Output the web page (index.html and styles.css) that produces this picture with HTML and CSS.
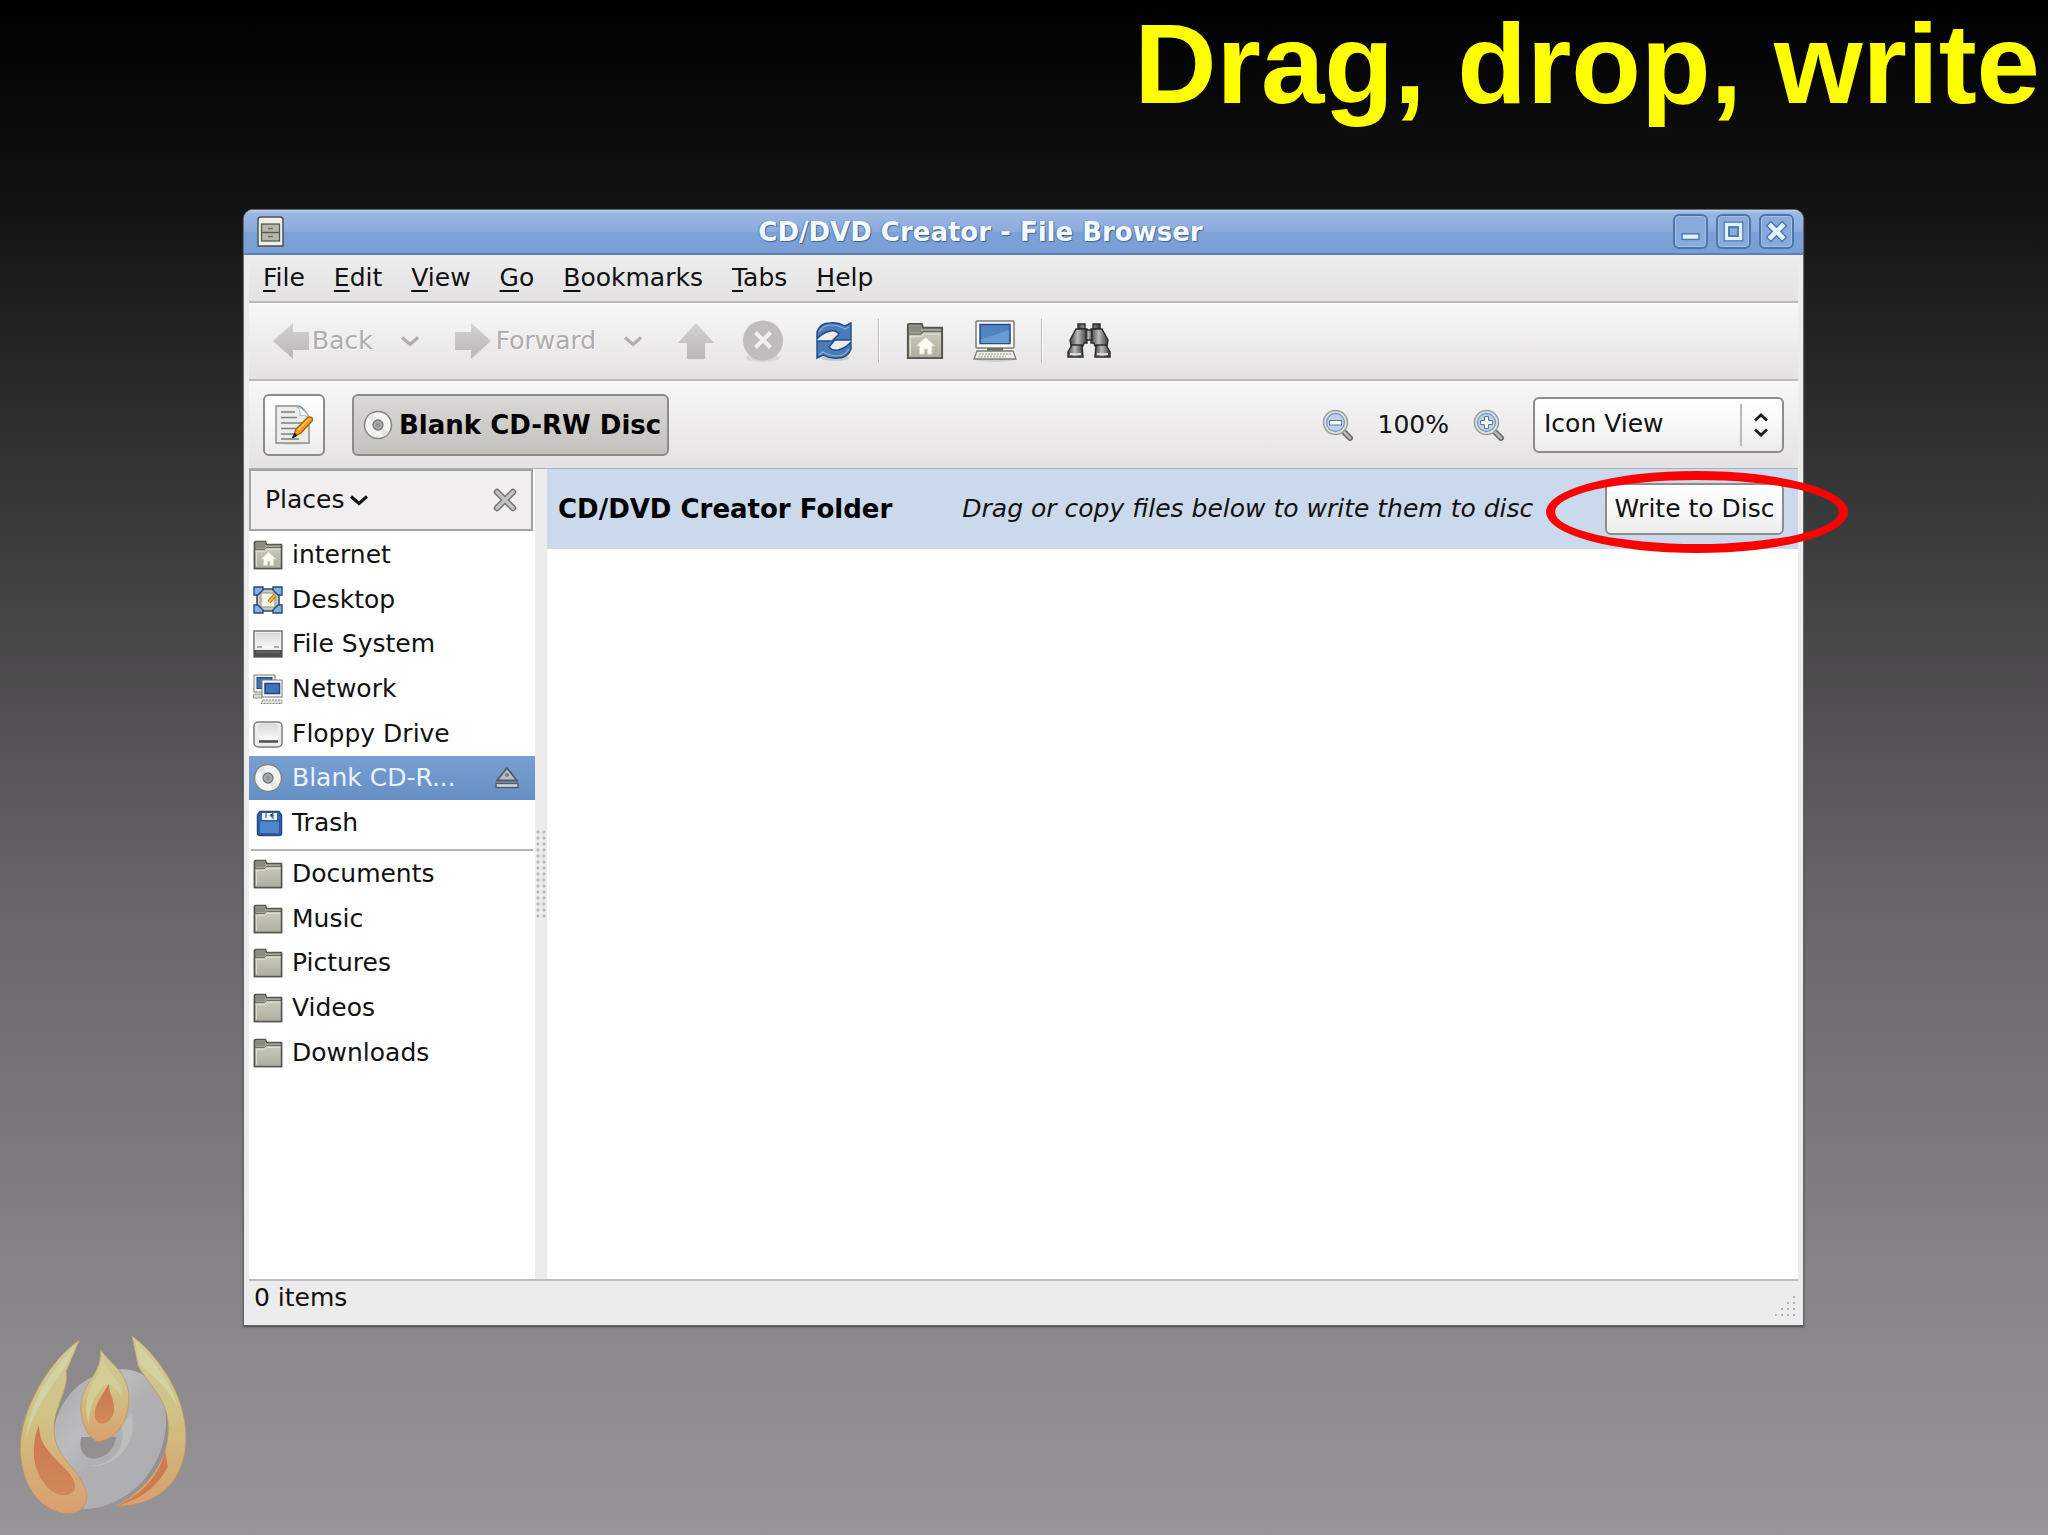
FILE: index.html
```html
<!DOCTYPE html>
<html lang="en">
<head>
<meta charset="utf-8">
<title>Drag, drop, write</title>
<link rel="stylesheet" href="styles.css">
</head>
<body>
<svg class="defs" aria-hidden="true">
  <defs>
    <linearGradient id="g-folder" x1="0" y1="0" x2="0" y2="1"><stop offset="0" stop-color="#c9cabc"/><stop offset="1" stop-color="#adae9e"/></linearGradient>
    <linearGradient id="g-grey" x1="0" y1="0" x2="0" y2="1"><stop offset="0" stop-color="#d2d0d1"/><stop offset="1" stop-color="#b9b7b8"/></linearGradient>
    <linearGradient id="g-white" x1="0" y1="0" x2="0" y2="1"><stop offset="0" stop-color="#d8d8d8"/><stop offset="1" stop-color="#fbfbfb"/></linearGradient>
    <linearGradient id="g-metal" x1="0" y1="0" x2="1" y2="0"><stop offset="0" stop-color="#444"/><stop offset=".45" stop-color="#bbb"/><stop offset="1" stop-color="#3a3a3a"/></linearGradient>
    <symbol id="folder" viewBox="0 0 30 30">
      <path d="M1.500 28.500V2.500Q1.500 1.500 2.500 1.500H12.500L13.500 4.500H28.500V28.500Z" fill="#a5a697" stroke="#55574f" stroke-width="1.500"/>
      <path d="M2.500 9.500H11.500L13.500 7.500H28.500V28.500H1.500V10Z" fill="url(#g-folder)" stroke="#6d6f65" stroke-width="1"/>
      <path d="M1.500 2V28.500H28.500V5" fill="none" stroke="#55574f" stroke-width="1.500"/>
      <path d="M3.500 26.500V11.500H12L14 9.500H26.500" fill="none" stroke="#dcddd2" stroke-width="1"/>
      <path d="M3 3h9v5H3z" fill="#8b8c80"/>
    </symbol>
    <symbol id="home" viewBox="0 0 30 30">
      <use href="#folder"/>
      <path d="M15.500 12L23 19H20.500V25.500H17V21.500H14.500V25.500H10.500V19H8Z" fill="#fbfaf0" stroke="#d0cfbf" stroke-width=".6"/>
    </symbol>
    <symbol id="disc" viewBox="0 0 30 30">
      <circle cx="15" cy="15" r="13.500" fill="#f4f4f4" stroke="#85857f" stroke-width="1.500"/>
      <path d="M15 15L4 8A13 13 0 0 1 10 3ZM15 15L26 22A13 13 0 0 1 20 27Z" fill="#e4e4e4"/>
      <circle cx="15" cy="15" r="5" fill="#a3a9ad" stroke="#777" stroke-width="1.300"/>
      <circle cx="15" cy="15" r="2" fill="#8d9498"/>
    </symbol>
    <symbol id="lens" viewBox="0 0 32 32">
      <path d="M20 21L28 29" stroke="#6b6b67" stroke-width="6" stroke-linecap="round"/>
      <path d="M22 23L28 29" stroke="#b9b9b3" stroke-width="2.500" stroke-linecap="round"/>
      <circle cx="13.500" cy="13.500" r="12" fill="#dfe3e2" stroke="#9a9e99" stroke-width="1.500"/>
      <circle cx="13.500" cy="13.500" r="9" fill="#bcd0ea" stroke="#7c97bd" stroke-width="1.300"/>
    </symbol>
    <symbol id="chevron" viewBox="0 0 20 12"><path d="M2 2.500L10 9.500L18 2.500" fill="none" stroke="currentColor" stroke-width="3"/></symbol>
  </defs>
</svg>

<header class="slide-head"><h1 class="slide-title">Drag, drop, write</h1></header>

<main class="window">
  <div class="titlebar">
    <svg class="app-icon" viewBox="0 0 27 31">
      <path d="M1 4Q1 1 4 1H23Q26 1 26 4V30H1Z" fill="#f1f1ec" stroke="#4c5350" stroke-width="1.500"/>
      <rect x="4.500" y="8" width="18" height="17" fill="#b6b8ac" stroke="#555a55" stroke-width="1.300"/>
      <path d="M5 16.500H22" stroke="#555a55" stroke-width="1.500"/><path d="M11 12.500H16M11 20.500H16" stroke="#6b6f6b" stroke-width="1.500"/>
    </svg>
    <h2 class="window-title">CD/DVD Creator - File Browser</h2>
    <div class="window-buttons">
      <button class="wbtn" aria-label="Minimize"><svg viewBox="0 0 33 33"><rect x="7.500" y="19" width="18" height="6" fill="#e3f3ff" stroke="#4a76aa" stroke-width="1.500"/></svg></button>
      <button class="wbtn" aria-label="Maximize"><svg viewBox="0 0 33 33"><rect x="9" y="9" width="15" height="15" fill="none" stroke="#4a76aa" stroke-width="6"/><rect x="9" y="9" width="15" height="15" fill="none" stroke="#e3f3ff" stroke-width="3.500"/><rect x="12" y="12.500" width="9" height="8.500" fill="none" stroke="#4a76aa" stroke-width="1.200"/></svg></button>
      <button class="wbtn" aria-label="Close"><svg viewBox="0 0 33 33"><path d="M10.500 10.500L22.500 22.500M22.500 10.500L10.500 22.500" stroke="#4a76aa" stroke-width="8" stroke-linecap="square"/><path d="M10.500 10.500L22.500 22.500M22.500 10.500L10.500 22.500" stroke="#e3f3ff" stroke-width="5"  stroke-linecap="square"/></svg></button>
    </div>
  </div>

  <div class="window-body">
    <nav class="menubar">
      <button class="menu"><u>F</u>ile</button>
      <button class="menu"><u>E</u>dit</button>
      <button class="menu"><u>V</u>iew</button>
      <button class="menu"><u>G</u>o</button>
      <button class="menu"><u>B</u>ookmarks</button>
      <button class="menu"><u>T</u>abs</button>
      <button class="menu"><u>H</u>elp</button>
    </nav>

    <div class="toolbar" role="toolbar">
      <button class="tool nav" disabled><svg class="i36" viewBox="0 0 36 36"><path d="M0 18L20 0V9H36V27H20V36Z" fill="url(#g-grey)"/></svg><span>Back</span></button>
      <button class="tool back-drop" aria-label="Back history" disabled><svg class="chev"><use href="#chevron"/></svg></button>
      <button class="tool nav" disabled><svg class="i36" viewBox="0 0 36 36"><path d="M36 18L16 0V9H0V27H16V36Z" fill="url(#g-grey)"/></svg><span class="fwd">Forward</span></button>
      <button class="tool fwd-drop" aria-label="Forward history" disabled><svg class="chev"><use href="#chevron"/></svg></button>
      <button class="tool up" aria-label="Up" disabled><svg class="i36" viewBox="0 0 36 36"><path d="M18 0L36 20H27V36H9V20H0Z" fill="url(#g-grey)"/></svg></button>
      <button class="tool stop" aria-label="Stop" disabled><svg class="i42" viewBox="0 0 42 42"><ellipse cx="21" cy="38" rx="17" ry="4" fill="#d8d7d7"/><circle cx="21" cy="20.500" r="20" fill="#bfbdbe"/><path d="M13.500 12.500L28.500 27.500M28.500 12.500L13.500 27.500" stroke="#f1f1f1" stroke-width="4"/></svg></button>
      <button class="tool reload" aria-label="Reload"><svg class="i36 tall" viewBox="0 0 36 40">
        <ellipse cx="19" cy="37" rx="14" ry="3" fill="#c9c9c9"/>
        <path d="M1 18V11Q4 2 14 2Q22 1 29 5L35 2V19H17L23 13Q20 9 14 10Q6 12 1 18Z" fill="#4a7cba" stroke="#204a87" stroke-width="1.400"/>
        <path d="M35 21V28Q32 37 22 37Q14 38 7 34L1 37V20H18L13 26Q16 30 22 29Q30 27 35 21Z" fill="#4a7cba" stroke="#204a87" stroke-width="1.400"/>
        <path d="M3 11Q7 4 15 4Q22 4 29 8L33 6M33 28Q29 35 21 35Q14 35 7 31L3 34" stroke="#8db1da" stroke-width="1.200" fill="none"/>
      </svg></button>
      <span class="sep"></span>
      <button class="tool home" aria-label="Home"><svg class="i38"><use href="#home"/></svg></button>
      <button class="tool computer" aria-label="Computer"><svg class="i44" viewBox="0 0 44 42">
        <ellipse cx="22" cy="39" rx="20" ry="3" fill="#cfcfcf"/>
        <rect x="3" y="1" width="38" height="27" rx="1" fill="#fafafa" stroke="#7b7d78" stroke-width="1.500"/>
        <rect x="7" y="4.500" width="30" height="19" fill="#4f83c4" stroke="#274c80" stroke-width="1.500"/>
        <path d="M8 19L22 15L36 10V23H8Z" fill="#6a9ad2"/>
        <path d="M14 28H30V31H14Z" fill="#6c6e69"/>
        <path d="M4 31H40L43 39H1Z" fill="#ecece8" stroke="#7b7d78" stroke-width="1.300"/>
        <path d="M6 34H38M5 36.500H33" stroke="#b5b6b0" stroke-width="1.500" stroke-dasharray="2 1"/>
      </svg></button>
      <span class="sep second"></span>
      <button class="tool search" aria-label="Search"><svg class="i44 short" viewBox="0 0 44 36">
        <g fill="url(#g-metal)" stroke="#2b2b2b" stroke-width="1.400">
          <path d="M11 1H18V6H11ZM26 1H33V6H26Z"/>
          <path d="M9 6H20V20H17L16 23H4L3 17Z"/><path d="M24 6H35L41 17L40 23H28L27 20H24Z"/>
          <path d="M19 7H25V17H19Z"/>
          <path d="M5 22H15L16 34H1V29Z"/><path d="M29 22H39L43 29V34H28Z"/>
        </g>
        <path d="M3 31H14M30 31H41" stroke="#dadada" stroke-width="2"/>
      </svg></button>
    </div>

    <div class="location">
      <button class="edit-btn" aria-label="Edit location"><svg viewBox="0 0 38 40">
        <ellipse cx="18" cy="37.500" rx="17" ry="2.500" fill="#d4d4d4"/>
        <path d="M1 1H24Q29 3 34 12V38H1Z" fill="#ececea" stroke="#8f918c" stroke-width="1.500"/>
        <path d="M22 2Q26 5 25 11Q31 9 34 14Q31 4 22 2Z" fill="#fff" stroke="#a6b9d0"/>
        <path d="M6 7H20M6 12.500H22M6 18H29M6 23.500H25M6 29H18M6 34H24" stroke="#7e807c" stroke-width="1.500"/>
        <path d="M18 32L21 24L33 12Q37 11 38 15L26 28Z" fill="#f79b1c" stroke="#a55d00" stroke-width="1.200"/>
        <path d="M23 25L34 14" stroke="#fcc767" stroke-width="1.500"/><path d="M17.500 33L19.500 28L22 30.500Z" fill="#222" stroke="#222"/>
      </svg></button>
      <button class="path-btn"><svg class="i30"><use href="#disc"/></svg><span>Blank CD-RW Disc</span></button>
      <div class="zoom">
        <button class="tool" aria-label="Zoom out"><svg class="i32" viewBox="0 0 32 32"><use href="#lens"/><rect x="7.500" y="11.500" width="12" height="4.500" fill="#fff" stroke="#56779f"/></svg></button>
        <span class="zoom-level">100%</span>
        <button class="tool" aria-label="Zoom in"><svg class="i32" viewBox="0 0 32 32"><use href="#lens"/><path d="M11.500 7.500H15.500V11.500H19.500V15.500H15.500V19.500H11.500V15.500H7.500V11.500H11.500Z" fill="#fff" stroke="#56779f"/></svg></button>
      </div>
      <div class="view-mode">
        <select class="view-select" aria-label="View mode"><option>Icon View</option><option>List View</option><option>Compact View</option></select>
        <svg class="view-arrows" viewBox="0 0 20 26"><path d="M4 8.500L10 3L16 8.500M4 17.500L10 23L16 17.500" fill="none" stroke="#1c1c1c" stroke-width="2.800"/></svg>
      </div>
    </div>

    <div class="panes">
      <aside class="sidebar">
        <div class="side-head">
          <button class="places">Places<svg class="chev"><use href="#chevron"/></svg></button>
          <button class="side-close" aria-label="Close side pane"><svg class="i24" viewBox="0 0 24 24"><path d="M4 4L20 20M20 4L4 20" stroke="#757575" stroke-width="6.500" stroke-linecap="round"/><path d="M4 4L20 20M20 4L4 20" stroke="#c2c2c2" stroke-width="3.500" stroke-linecap="round"/></svg></button>
        </div>
        <ul class="places-list devices">
          <li class="place"><svg class="i30"><use href="#home"/></svg><span>internet</span></li>
          <li class="place"><svg class="i30" viewBox="0 0 30 30">
            <rect x="4" y="4" width="22" height="22" fill="#c7cbb6" stroke="#39485c" stroke-width="1.500"/>
            <rect x="8" y="8" width="14" height="14" fill="#f6f5e5" stroke="#8f927d"/>
            <path d="M16 17L22 10" stroke="#9a6b00" stroke-width="4"/><path d="M16 17L22 10" stroke="#f2b632" stroke-width="2.500"/>
            <path d="M1 2H10V5L5 10H1ZM20 2H29V10H25L20 5ZM1 20H5L10 25V28H1ZM29 20V28H20V25L25 20Z" fill="#86aee0" stroke="#204a87" stroke-width="1.400"/>
          </svg><span>Desktop</span></li>
          <li class="place"><svg class="i30" viewBox="0 0 30 30"><rect x="1" y="2" width="28" height="26" fill="#f0f0f0" stroke="#72746f" stroke-width="1.500"/><path d="M3 4H27V16Q15 23 3 16Z" fill="url(#g-white)"/><path d="M4 18H9M21 18H26" stroke="#999" stroke-width="1.500"/><path d="M1 21H29V28H1Z" fill="#4e504d"/><path d="M3 23H27" stroke="#777"/></svg><span>File System</span></li>
          <li class="place"><svg class="i30" viewBox="0 0 30 30"><rect x="1" y="1" width="21" height="17" fill="#f3f3f1" stroke="#7b7d78"/><rect x="4" y="3.500" width="15" height="11" fill="#3f70b0" stroke="#204a87"/><path d="M1 20H9V24H0Z" fill="#d8d9cf" stroke="#96978f"/><rect x="9" y="6" width="20" height="17" fill="#f5f5f3" stroke="#7b7d78"/><rect x="12" y="9.500" width="14.500" height="10" fill="#3e73b7" stroke="#204a87" stroke-width="1.500"/><path d="M10 26H29V29.500H8Z" fill="#ddded8" stroke="#85877f" stroke-dasharray="2 1"/></svg><span>Network</span></li>
          <li class="place"><svg class="i30" viewBox="0 0 30 30"><rect x="1" y="3" width="28" height="25" rx="4" fill="#ededed" stroke="#7c7e79" stroke-width="1.500"/><rect x="5" y="4.500" width="20" height="16" rx="3" fill="url(#g-white)"/><path d="M6 22.500H25" stroke="#4f504e" stroke-width="2.500"/></svg><span>Floppy Drive</span></li>
          <li class="place selected"><svg class="i30"><use href="#disc"/></svg><span>Blank CD-R...</span><button class="eject" aria-label="Eject"><svg class="i24" viewBox="0 0 24 24"><path d="M12 2L22 14.500H2Z" fill="#b8bfc5" stroke="#555c63" stroke-width="1.800"/><rect x="1" y="17.500" width="22" height="4" fill="#d7dbde" stroke="#555c63" stroke-width="1.500"/><circle cx="12" cy="9" r="2" fill="#777f86"/></svg></button></li>
          <li class="place"><svg class="i30" viewBox="0 0 30 30"><path d="M4.500 7L7 3.500H26L28.500 7V25Q28.500 27.500 26 27.500H7Q4.500 27.500 4.500 25Z" fill="#3565a4" stroke="#204a87" stroke-width="1.500"/><path d="M9 5H24V12H9Z" fill="#f2f6fb"/><path d="M13 5V10M17 7L20 10V5" stroke="#5b7ca8" stroke-width="1.500"/><path d="M6.500 13H26.500V25.500H6.500Z" fill="#5188cc" stroke="#2c5a99"/></svg><span>Trash</span></li>
        </ul>
        <hr class="side-rule">
        <ul class="places-list bookmarks">
          <li class="place"><svg class="i30"><use href="#folder"/></svg><span>Documents</span></li>
          <li class="place"><svg class="i30"><use href="#folder"/></svg><span>Music</span></li>
          <li class="place"><svg class="i30"><use href="#folder"/></svg><span>Pictures</span></li>
          <li class="place"><svg class="i30"><use href="#folder"/></svg><span>Videos</span></li>
          <li class="place"><svg class="i30"><use href="#folder"/></svg><span>Downloads</span></li>
        </ul>
      </aside>
      <div class="splitter"><span class="grip"></span></div>
      <section class="content">
        <div class="infobar">
          <strong class="info-title">CD/DVD Creator Folder</strong>
          <em class="info-hint">Drag or copy files below to write them to disc</em>
          <div class="write-wrap">
            <button class="write-btn">Write to Disc</button>
            <span class="ring"></span>
          </div>
        </div>
      </section>
    </div>

    <footer class="statusbar">
      <span>0 items</span>
      <svg class="resize" viewBox="0 0 24 24"><path d="M19 1h2v2h-2zM13 7h2v2h-2zM19 7h2v2h-2zM7 13h2v2h-2zM13 13h2v2h-2zM19 13h2v2h-2zM1 19h2v2h-2zM7 19h2v2h-2zM13 19h2v2h-2zM19 19h2v2h-2z" fill="#b2b2b2"/></svg>
    </footer>
  </div>
</main>

<footer class="slide-foot">
  <svg class="logo" viewBox="0 0 560 560" role="img" aria-label="Burning disc">
    <defs>
      <linearGradient id="g-flame" x1="0" y1="0" x2="0" y2="1"><stop offset="0" stop-color="#cfc99a"/><stop offset=".45" stop-color="#cfc284"/><stop offset="1" stop-color="#d99f6c"/></linearGradient>
      <linearGradient id="g-core" x1="0" y1="0" x2="0" y2="1"><stop offset="0" stop-color="#cf7450"/><stop offset="1" stop-color="#cf8a58"/></linearGradient>
      <linearGradient id="g-disc" x1="0" y1="0" x2="1" y2="1"><stop offset="0" stop-color="#a9a9ae"/><stop offset=".35" stop-color="#bcbcbe"/><stop offset=".5" stop-color="#b0b0b3"/><stop offset="1" stop-color="#acacb0"/></linearGradient>
    </defs>
    <path fill-rule="evenodd" d="M370 105C450 110 500 170 500 260C500 400 390 525 250 528C190 490 150 400 160 310C166 200 250 110 370 105ZM245 310C235 345 250 375 285 375C320 372 345 345 350 310Z" fill="url(#g-disc)"/>
    <path d="M365 275C385 330 340 400 270 395C330 410 420 340 395 240Z" fill="#bdbebc"/>
    <path d="M240 18C160 70 75 200 62 320C55 420 95 520 190 540C240 545 265 520 260 480C250 410 165 380 163 290C160 220 210 170 200 110C215 80 225 50 240 18Z" fill="url(#g-flame)" stroke="#b99258" stroke-width="2"/>
    <path d="M117 275C95 330 95 400 130 445C155 485 200 500 225 470C235 425 180 400 140 345C125 325 118 300 117 275Z" fill="url(#g-core)"/>
    <path d="M225 35C150 115 90 200 78 320C92 250 145 170 205 85Z" fill="#d3d2a2"/>
    <path d="M397 5C460 50 560 170 560 310C560 440 480 520 345 518C430 480 520 380 505 260C500 190 430 130 415 95Z" fill="url(#g-flame)" stroke="#b99258" stroke-width="2"/>
    <path d="M497 350C480 430 420 490 350 517C430 500 480 450 505 400Z" fill="#cf7a52"/>
    <path d="M408 22C450 70 510 130 535 220C500 150 450 120 420 90Z" fill="#d3d2a2"/>
    <path d="M302 45C325 85 385 110 388 190C388 270 345 320 292 325C255 300 235 250 247 190C262 140 308 110 302 45Z" fill="url(#g-flame)" stroke="#b99258" stroke-width="2"/>
    <path d="M310 70C320 120 370 140 368 190C345 150 315 140 300 170C280 190 265 240 270 275C250 240 260 170 290 130Z" fill="#d3cd98"/>
    <path d="M327 150C310 185 280 215 286 250C292 285 340 270 343 230C346 200 328 180 327 150Z" fill="url(#g-core)"/>
  </svg>
</footer>
</body>
</html>
```
FILE: styles.css
```css
* { box-sizing: border-box; }

body {
  margin: 0;
  min-height: 100vh;
  display: flex;
  flex-direction: column;
  background: linear-gradient(#000 0%, #131213 13%, #343334 30%, #676567 58%, #858385 82%, #979597 100%) no-repeat #979597;
  font-family: "DejaVu Sans", sans-serif;
  font-size: 25px;
  line-height: 32px;
  color: #111;
}

.defs { position: absolute; width: 0; height: 0; }

button, select { font: inherit; color: inherit; margin: 0; }
button { background: none; border: 0; padding: 0; }
svg { display: block; flex: none; }

.i24 { width: 24px; height: 24px; }
.i30 { width: 30px; height: 30px; }
.i32 { width: 32px; height: 32px; }
.i36 { width: 36px; height: 36px; }
.i38 { width: 38px; height: 38px; }
.i42 { width: 42px; height: 42px; }
.i44 { width: 44px; height: 42px; }
.i36.tall { height: 40px; }
.i44.short { height: 36px; }
.chev { width: 20px; height: 12px; }

.slide-head { padding-right: 8px; margin-bottom: 81px; }
.slide-title {
  margin: 0;
  text-align: right;
  color: #ff0;
  font: bold 114px/128px "Liberation Sans", Arial, sans-serif;
}

.window {
  margin: 0 244px 0 243px;
  border: 1px solid #62666a;
  border-radius: 10px 10px 0 0;
  background: #edecec;
  box-shadow: 0 1px 2px #444;
}

.titlebar {
  height: 45px;
  display: flex;
  align-items: center;
  padding: 0 9px 0 13px;
  border-radius: 9px 9px 0 0;
  border-bottom: 2px solid #5b82b4;
  background: linear-gradient(#bccff0 0, #9ab7e3 3px, #8cabdc 50%, #7ba1d7 52%, #7a9fd4 100%);
}
.app-icon { width: 27px; height: 31px; }
.window-title {
  flex: 1;
  margin: 0;
  padding-left: 4px;
  text-align: center;
  font-size: 26px;
  line-height: 32px;
  color: #f4fbff;
  text-shadow: 1px 1px 1px #3e6396, -1px 0 1px #5f86bc;
}
.window-buttons { display: flex; gap: 8px; }
.wbtn {
  width: 35px;
  height: 35px;
  border: 2px solid #4a76aa;
  border-radius: 6px;
  background: #88abdc;
  box-shadow: inset 0 0 0 1px #a3c0e8;
}
.wbtn svg { width: 31px; height: 31px; }

.window-body {
  border: solid #edecec;
  border-width: 0 5px 2px;
}

.menubar {
  height: 48px;
  display: flex;
  align-items: center;
  gap: 29px;
  padding-left: 14px;
  background: linear-gradient(#ededec, #e4e2e3);
  border-bottom: 2px solid #bbb9ba;
}
.menu u { text-underline-offset: 4px; text-decoration-thickness: 2px; }

.toolbar, .location {
  display: flex;
  align-items: center;
  background: linear-gradient(#f8f7f7, #e4e2e3);
}
.toolbar {
  height: 78px;
  padding: 0 0 2px 24px;
  border-top: 1px solid #fff;
  border-bottom: 2px solid #bbb9ba;
}
.tool { display: flex; align-items: center; }
.tool:disabled { color: #aeacad; text-shadow: 1px 1px 0 #fff; }
.nav { gap: 3px; }
.fwd { padding-left: 2px; }
.back-drop, .fwd-drop { margin: 0 35px 0 27px; }
.up { margin-right: 28px; }
.stop { margin-right: 32px; }
.sep { width: 2px; height: 44px; margin: 0 26px; background: #bcbabb; border-right: 1px solid #fff; }
.home { margin-right: 29px; }
.sep.second { margin: 0 24px; }

.location {
  height: 88px;
  padding: 0 14px;
  border-bottom: 1px solid #a9b0ba;
}
.edit-btn, .path-btn, .write-btn, .view-select {
  border: 2px solid #8e8c8b;
  border-radius: 6px;
  background: linear-gradient(#fff, #f8f8f8 50%, #ececec);
}
.edit-btn { width: 62px; height: 62px; display: grid; place-items: center; }
.edit-btn svg { width: 38px; height: 40px; }
.path-btn {
  height: 62px;
  margin-left: 27px;
  padding: 0 6px 0 9px;
  display: flex;
  align-items: center;
  gap: 6px;
  background: linear-gradient(#dad8d5, #c4c2bf);
  font-size: 26px;
  font-weight: bold;
  color: #000;
}
.zoom { margin-left: auto; display: flex; align-items: center; gap: 24px; }
.view-mode { position: relative; margin-left: 28px; width: 251px; }
.view-select {
  appearance: none;
  display: block;
  width: 100%;
  height: 56px;
  padding: 0 48px 2px 9px;
}
.view-arrows {
  position: absolute;
  right: 2px;
  top: 7px;
  width: 42px;
  height: 42px;
  padding: 8px 11px 8px 9px;
  border-left: 2px solid #bdbbba;
  pointer-events: none;
}

.panes { display: flex; min-height: 810px; background: #fff; }
.sidebar { width: 286px; flex: none; }
.side-head {
  height: 62px;
  margin-right: 2px;
  padding: 0 14px;
  display: flex;
  align-items: center;
  justify-content: space-between;
  border: 2px solid #a3a1a1;
  background: #f0eeee;
}
.places { display: flex; align-items: center; gap: 4px; color: #111; }
.places-list { list-style: none; margin: 0; padding: 0; display: grid; grid-auto-rows: 1fr; }
.devices { height: 312px; margin-top: 2px; }
.bookmarks { height: 223px; }
.place { display: flex; align-items: center; gap: 9px; padding: 0 16px 0 4px; }
.selected { background: linear-gradient(#789fd3, #668fc6); color: #e9f3fb; }
.eject { margin-left: auto; }
.side-rule { margin: 4px 2px 1px; height: 2px; border: 0; background: #b5b5b5; }

.splitter {
  width: 12px;
  flex: none;
  display: grid;
  place-items: center;
  background: #edecec;
}
.grip {
  width: 12px;
  height: 90px;
  background: radial-gradient(circle at 3px 3px, #b9b9b9 1px, transparent 2px) 0 0 / 6px 6px;
}

.content { flex: 1; background: #fff; }
.infobar {
  height: 80px;
  padding: 0 14px 0 11px;
  display: flex;
  align-items: center;
  background: #cbd9ec;
}
.info-title { font-size: 26px; color: #000; }
.info-hint { margin-left: 70px; }
.write-wrap { position: relative; margin-left: auto; }
.write-btn { height: 52px; width: 179px; white-space: nowrap; }
.ring {
  position: absolute;
  inset: -12px -64px -18px -59px;
  border: 9px solid #f00;
  border-radius: 50%;
  pointer-events: none;
}

.statusbar {
  height: 44px;
  display: flex;
  align-items: flex-start;
  justify-content: space-between;
  padding: 1px 0 0 5px;
  border-top: 2px solid #bdbbbc;
}
.resize { width: 24px; height: 24px; margin-top: 13px; }

.slide-foot { margin-top: 8px; padding-bottom: 20px; }
.logo { width: 186px; height: 186px; }
```
